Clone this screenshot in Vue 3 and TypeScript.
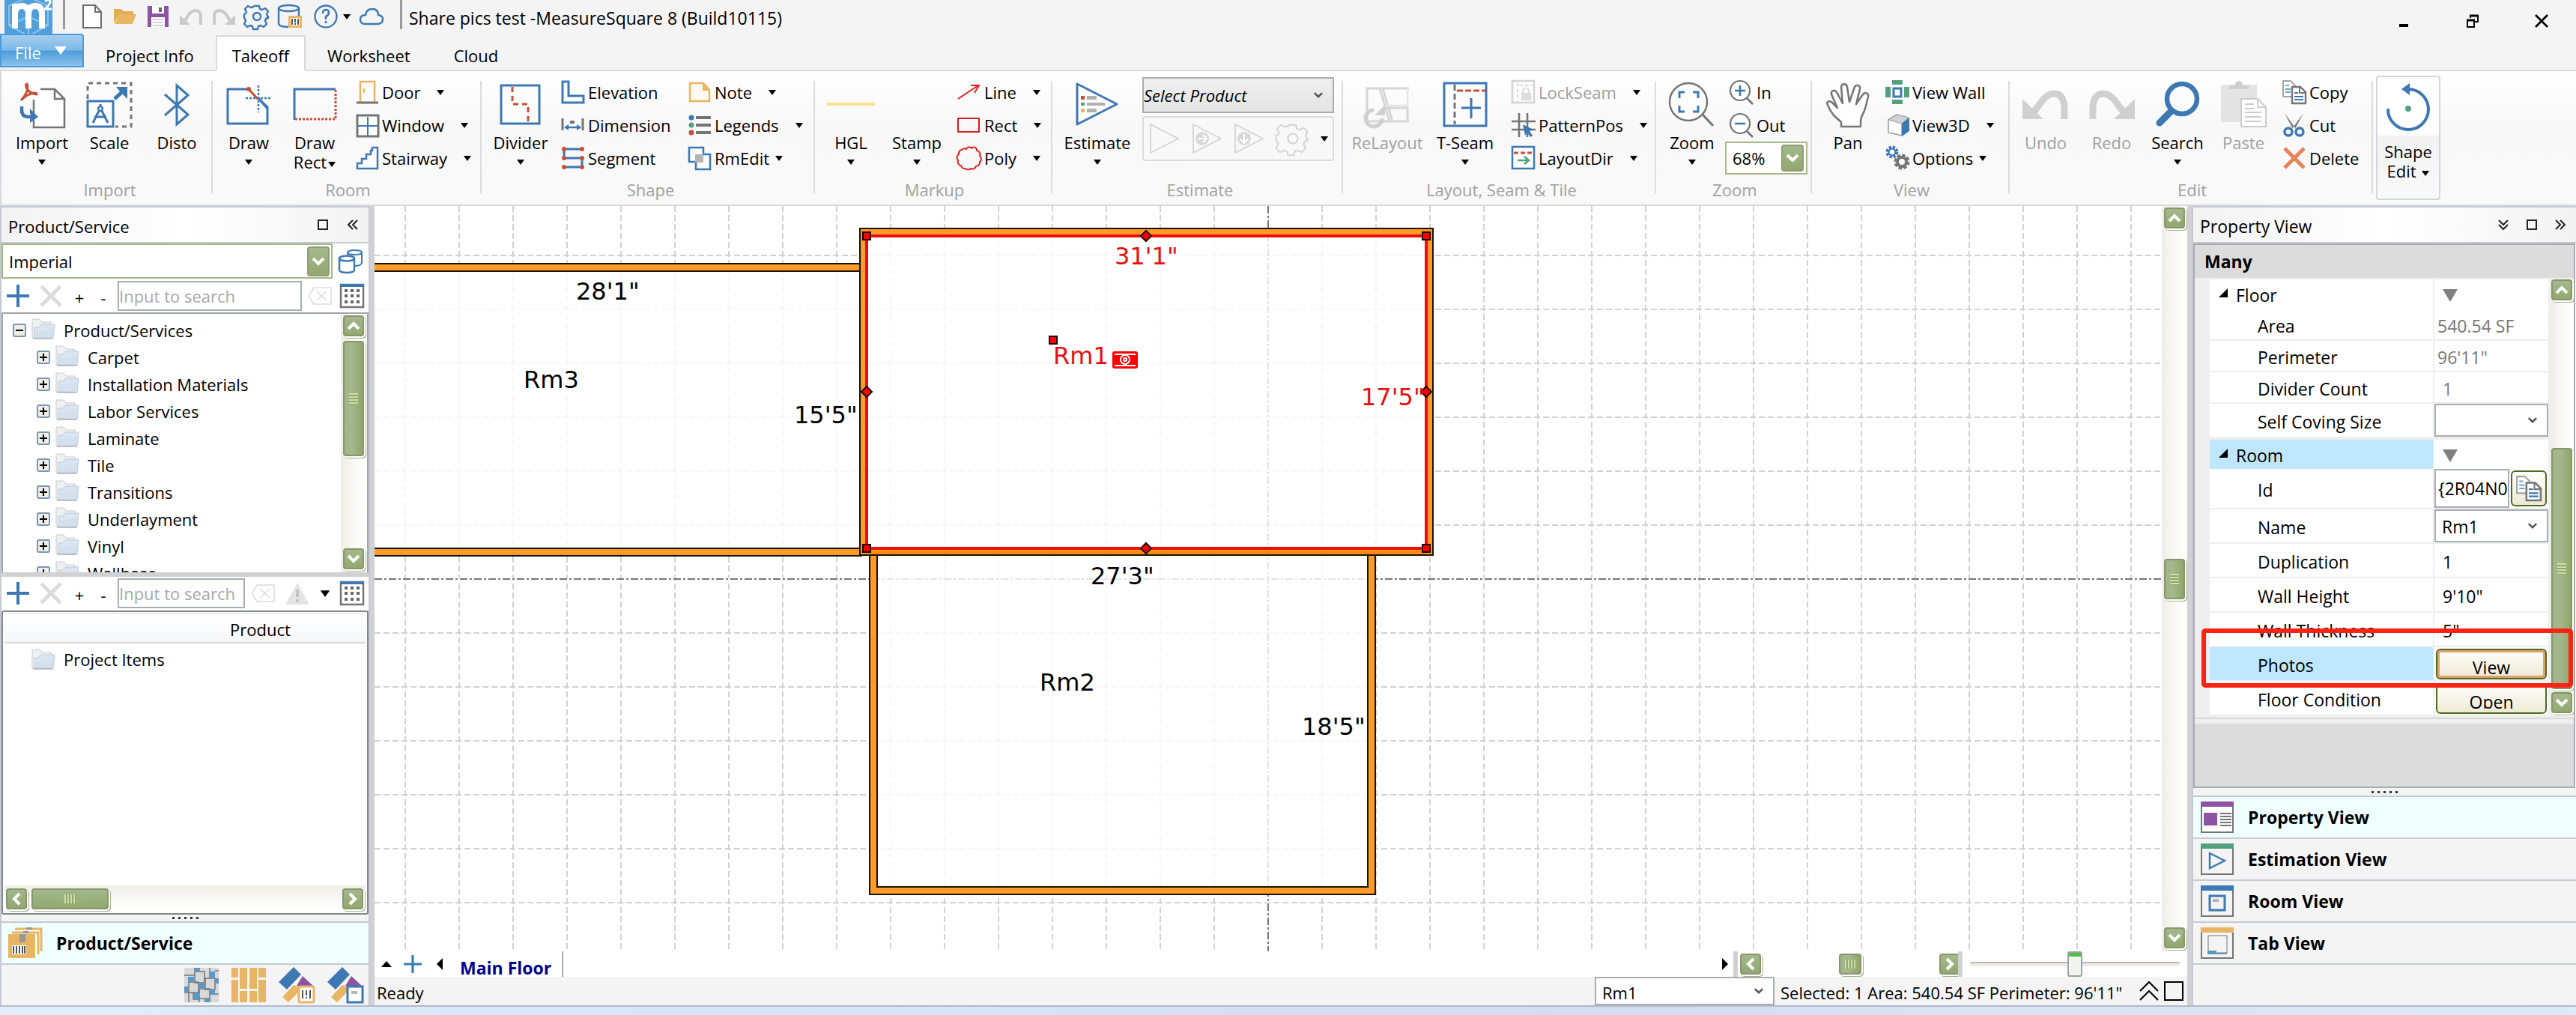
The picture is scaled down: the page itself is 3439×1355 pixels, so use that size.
<script setup lang="ts">
import { h, ref } from 'vue'

type Glyph = [string, string]

const B = '#3e78b3', R = '#c8503a', G = '#757575', GR = '#52a17e', Y = '#e8b564', P = '#8c54a1', L = '#d4d4d4'
const s = (c: string, w = 3) => `fill="none" stroke="${c}" stroke-width="${w}"`
const gear = (c: string, w: number) =>
  `<path ${s(c, w)} stroke-linejoin="round" d="M13 2h6l1 4 3 1 4-2 4 4-2 4 1 2 0 1 1 0v0l0 0v0l0 2-3 1-1 3 2 4-4 4-4-2-3 1-1 4h-6l-1-4-3-1-4 2-4-4 2-4-1-3-1-1V13l2-1 1-2-2-4 4-4 4 2 3-1z"/><circle cx="16" cy="16" r="5" ${s(c, w)}/>`

const glyphs: Record<string, Glyph> = {
  logo: ['0 0 64 45', `<rect width="64" height="45" fill="#519fda"/><path ${s('#8cc2ea', 2)} d="M32-4 6 8v26l26 14 26-14V8zM6 34l26-12 26 12M32 22v24"/><path ${s('#fff', 8)} d="M14 38V5M14 19q0-11 9-11t9 11v19M32 19q0-11 9-11t9 11v19"/><path ${s('#fff', 3)} d="M54 2q6-5 7 0 0 4-7 10h9"/>`],
  newdoc: ['0 0 32 32', `<path fill="#fff" stroke="#6c6c6c" stroke-width="2" d="M4 1h16l8 9v21H4z"/><path ${s('#6c6c6c', 2)} d="M20 1v9h8"/>`],
  open: ['0 0 32 32', `<path fill="#e2ab56" d="M1 6h10l3 3h13v5H8L1 25z"/><path fill="${Y}" d="M8 13h23l-5 13H2z"/>`],
  save: ['0 0 32 32', `<path fill="${P}" d="M2 2h28v28H2z"/><path fill="#fff" d="M8 2h16v10H8zM7 17h18v13H7z"/><path fill="#666" d="M17 4h4v6h-4z"/><path ${s('#aaa', 1)} d="M9 20h14M9 24h14M9 28h14"/>`],
  qundo: ['0 0 32 32', `<path ${s('#c9c9c9', 4)} d="M29 27V16q0-8-7-8t-13 12L6 23"/><path fill="#c9c9c9" d="M1 14v13h14z"/>`],
  qredo: ['0 0 32 32', `<path ${s('#c9c9c9', 4)} d="M3 27V16q0-8 7-8t13 12l3 3"/><path fill="#c9c9c9" d="M31 14v13H17z"/>`],
  gear: ['0 0 32 32', gear(B, 2.4)],
  gearoff: ['0 0 32 32', gear(L, 1.6)],
  db: ['0 0 32 32', `<path ${s(B, 2.4)} d="M1 5v20q0 5 13 5M28 15V5"/><ellipse cx="14.500" cy="5" rx="13.500" ry="4" ${s(B, 2.4)}/><path fill="${Y}" d="M14 15h18v16H14z"/><path fill="#fff" d="M17 18h12v10H17z"/><path ${s('#555', 2)} d="M19 19v8M23 19v5m0 1v2M27 19v8"/>`],
  help: ['0 0 32 32', `<circle cx="16" cy="16" r="14.500" ${s(B, 2.4)}/><path ${s(B, 2.6)} d="M12 12q0-5 4-5t4 4q0 3-4 5v4M16 22v3"/>`],
  cloud: ['0 0 32 32', `<path ${s(B, 2.4)} d="M7 26q-6 0-6-6t7-6q1-8 9-8t8 8q6 1 6 6t-6 6z"/>`],
  import: ['0 0 64 64', `<path fill="#fff" stroke="${G}" stroke-width="2.500" d="M30 11h19l13 13v38H21V25"/><path ${s(G, 2.5)} d="M49 11v13h13"/><path ${s(R, 3)} d="M4 26c6-6 11-16 8-22-4 0 0 13 13 14 1-4-12-2-21 8z"/><path ${s(B, 4.5)} d="M5 34v5q0 9 9 9h8"/><path fill="${B}" d="m16 37 11 11-11 8v-5l4-3-4-4z"/>`],
  scale: ['0 0 64 64', `<path ${s(G, 3)} stroke-dasharray="6 5" d="M3 24V3h58v58H40"/><path fill="#fff" stroke="${B}" stroke-width="3" d="M3 27h34v34H3z"/><path ${s(B, 5)} d="M39 24 54 10"/><path fill="${B}" d="M41 8h15v16l-5-5-4-4z"/><circle cx="20" cy="37" r="3" ${s(B, 2.4)}/><path ${s(B, 3)} d="m18 40-8 16M22 40l8 16M12 48h16M20 31v4"/>`],
  disto: ['0 0 64 64', `<path ${s(B, 3)} d="m16 46 31-27L32 6v52l15-13-31-27"/>`],
  draw: ['0 0 64 64', `<path fill="#fcfcfc" stroke="${B}" stroke-width="3" d="M32 11H4v46h53V35L32 11"/><path stroke="#fcfcfc" stroke-width="4" d="m33 11 13 12"/><path ${s(R, 3)} d="m32 11 12 13"/><circle cx="32" cy="11" r="3" fill="${R}"/><path ${s(B, 2.5)} stroke-dasharray="3 2" d="M28 23h34M45 6v36"/><path ${s(B, 3)} d="m44 22 13 15"/>`],
  drawrect: ['0 0 64 64', `<path ${s(B, 3)} d="M5 52V11h55"/><path ${s(R, 3)} stroke-dasharray="3 2" d="M60 12v39H6"/>`],
  divider: ['0 0 64 64', `<path fill="#fcfcfc" stroke="${B}" stroke-width="3" d="M6 6h51v51H6z"/><path ${s(R, 3)} stroke-dasharray="7 5" d="M21 8v23h21v26"/>`],
  hgl: ['0 0 64 64', `<path fill="#f5e48a" d="M0 29h64v4H0z"/>`],
  blank: ['0 0 64 64', ''],
  estimate: ['0 0 64 64', `<path fill="#fcfcfc" stroke="${B}" stroke-width="3" stroke-linejoin="round" d="M5 4 58 31 5 58z"/><path fill="${R}" d="M10 20h5v5h-5z"/><path fill="${GR}" d="M10 29h5v4h-5z"/><path fill="${Y}" d="M10 37h5v5h-5z"/><path fill="#b0b0b0" d="M18 20h13v5H18zM18 29h24v4H18zM18 37h13v5H18z"/>`],
  relayout: ['0 0 64 64', `<path ${s('#d6d6d6', 3)} d="M61 10H5v44h56M22 10l13 44M26 10l13 44M59 36v18M31 36h28v18"/><path ${s('#e6e6e6', 2.5)} d="M29 33h30V10"/><circle cx="14" cy="50" r="11" fill="none" stroke="#d0d0d0" stroke-width="5" stroke-dasharray="52 17"/><path fill="#d0d0d0" d="M15 46h14V32z"/>`],
  tseam: ['0 0 64 64', `<path fill="#fcfcfc" stroke="${B}" stroke-width="3" d="M4 3h56v57H4z"/><path ${s(G, 3)} stroke-dasharray="8 4" d="M18 5v53"/><path ${s(R, 3)} stroke-dasharray="8 3" d="M21 13h38"/><path ${s(B, 3)} d="M27 36h26M40 23v27"/>`],
  zoom: ['0 0 64 64', `<circle cx="27" cy="28" r="25" fill="#fff" stroke="${G}" stroke-width="2.500"/><path ${s(G, 3)} d="m46 45 14 15"/><path ${s(B, 3)} d="M15 23v-8h7M33 15h7v8M40 33v8h-7M22 41h-7v-8"/>`],
  pan: ['0 0 64 64', `<path fill="#fff" stroke="${G}" stroke-width="2.500" stroke-linejoin="round" d="M23 61V55L13 46C9 41 6 35 4 30 5 26 9 27 11 29L18 36 10 18C9 13 14 11 17 15L25 30 23 8C24 3 30 3 31 8L34 28 41 8C44 4 49 6 48 11L43 31 52 18C56 14 60 17 59 21 57 28 56 36 53 42 50 47 49 51 49 55V61Z"/>`],
  undo: ['0 0 64 64', `<path ${s('#d0d0d0', 9)} d="M57 51V34Q55 16 42 17 32 18 22 34L12 46"/><path fill="#d0d0d0" d="M1 24v27h28z"/>`],
  redo: ['0 0 64 64', `<path ${s('#d0d0d0', 9)} d="M7 51V34Q9 16 22 17 32 18 42 34L52 46"/><path fill="#d0d0d0" d="M63 24v27H35z"/>`],
  search: ['0 0 64 64', `<circle cx="38" cy="24" r="20" ${s(B, 6.5)}/><path ${s(B, 9)} stroke-linecap="round" d="M22 42 8 56"/>`],
  paste: ['0 0 64 64', `<path fill="#e4e4e4" d="M2 5h48v50H2z"/><path fill="#cfcfcf" d="M13 11V6h8q0-6 5-6t5 6h8v5z"/><path fill="#fff" stroke="#ccc" stroke-width="2" d="M29 24h22l11 11v26H29z"/><path ${s('#ccc', 2)} d="M51 24v11h11M34 31h12M34 37h12M34 42h22M34 48h22M34 54h22"/>`],
  shapeedit: ['0 0 64 64', `<path ${s(B, 4)} d="M5 34a27 27 0 1 0 27-26"/><path fill="${B}" d="m23 8 11-8v16z"/><circle cx="32" cy="34" r="4" fill="${GR}"/>`],
  door: ['0 0 32 32', `<path fill="#fffdf8" stroke="${Y}" stroke-width="2.500" d="M7 2h19v28H7z"/><path fill="${Y}" d="M11 11h2v6h-2z"/><path ${s(G, 3)} d="M2 30h29"/>`],
  window: ['0 0 32 32', `<path fill="#fff" stroke="${G}" stroke-width="3" d="M3 3h28v28H3z"/><path ${s(B, 2)} d="M17 5v25M4 17h26"/>`],
  stair: ['0 0 32 32', `<path fill="#fcfcfc" stroke="${B}" stroke-width="2.500" d="M3 30v-7h6v-6h6v-6h6V6h0 2V2h7v28z"/>`],
  elev: ['0 0 32 32', `<path fill="#fcfcfc" stroke="${B}" stroke-width="3" d="M2 2h8v19h20v9H2z"/>`],
  dimen: ['0 0 32 32', `<path ${s(G, 3)} d="M2 7v16M29 7v16"/><path fill="${G}" d="M12 10h6v4h-6z"/><path ${s(B, 2.5)} d="M6 19h20"/><path fill="${B}" d="m4 19 6-4v8zM27 19l-6-4v8z"/>`],
  segment: ['0 0 32 32', `<path ${s(B, 3)} d="M28 4H4v12h24v12H4"/><g fill="${R}"><circle cx="4" cy="4" r="3"/><circle cx="28" cy="4" r="3"/><circle cx="4" cy="16" r="3"/><circle cx="28" cy="16" r="3"/><circle cx="4" cy="28" r="3"/><circle cx="28" cy="28" r="3"/></g>`],
  note: ['0 0 32 32', `<path fill="#fffaf0" stroke="${Y}" stroke-width="2.500" d="M3 4h18l8 9v15H3z"/><path fill="${Y}" d="M20 4v10h9z"/>`],
  legends: ['0 0 32 32', `<path ${s(G, 4)} d="M11 6h20M11 16h20M11 26h20"/><circle cx="5" cy="6" r="3.500" fill="${B}"/><circle cx="5" cy="16" r="3.500" fill="${GR}"/><circle cx="5" cy="26" r="3.500" fill="${R}"/>`],
  rmedit: ['0 0 32 32', `<path fill="#fcfcfc" stroke="${B}" stroke-width="2.500" d="M2 2h19v9h9v20H11V21H2z"/><path fill="#b3b3b3" d="M10 11h11v11H10z"/>`],
  line: ['0 0 32 32', `<path ${s('#e02020', 2)} d="M1 25 28 7M18 7h11l-6 10"/>`],
  rect: ['0 0 32 32', `<path ${s('#d02020', 2)} d="M1 7h28v18H1z"/>`],
  poly: ['0 0 32 32', `<path ${s('#e02020', 2)} d="M12 4a4 4 0 0 1 7-1 4 4 0 0 1 7 3 5 5 0 0 1 4 7 5 5 0 0 1 0 8 5 5 0 0 1-5 6 5 5 0 0 1-7 3 5 5 0 0 1-7 0 5 5 0 0 1-6-4 5 5 0 0 1-4-7 5 5 0 0 1 1-8 5 5 0 0 1 4-6 5 5 0 0 1 6-1z"/>`],
  lockseam: ['0 0 32 32', `<path ${s(L, 2.5)} d="M1 1h29v29H1z"/><path ${s('#dcdcdc', 2)} stroke-dasharray="5 3" d="M8 3v26M10 7h19"/><path fill="#dcdcdc" d="M13 17h13v10H13z"/><path ${s('#dcdcdc', 2)} d="M15 17v-4q4-5 8 0v4"/>`],
  pattern: ['0 0 32 32', `<path ${s(G, 2.6)} d="M10 0v32M21 0v32M0 11h32M0 22h32"/><path fill="${B}" d="m15 15 14 7-5 2 4 6-3 2-4-6-3 4z"/>`],
  layoutdir: ['0 0 32 32', `<path fill="#fff" stroke="${B}" stroke-width="2.500" d="M1 1h29v29H1z"/><path ${s(R, 3)} stroke-dasharray="6 3" d="M3 9h27"/><path ${s(GR, 2.6)} d="M8 19h14M17 14l6 5-6 5"/>`],
  zin: ['0 0 32 32', `<circle cx="14" cy="14" r="13" fill="#fff" stroke="${G}" stroke-width="2.200"/><path ${s(G, 2.6)} d="m23 24 8 8"/><path ${s(B, 2.6)} d="M7 14h14M14 7v14"/>`],
  zout: ['0 0 32 32', `<circle cx="14" cy="14" r="13" fill="#fff" stroke="${G}" stroke-width="2.200"/><path ${s(G, 2.6)} d="m23 24 8 8"/><path ${s(B, 2.6)} d="M7 14h14"/>`],
  viewwall: ['0 0 32 32', `<path fill="${GR}" d="M9 0h14v6H9zM9 26h14v6H9zM0 9h7v14H0zM25 9h7v14h-7z"/><path fill="#fff" stroke="${B}" stroke-width="3" d="M11 11h10v11H11z"/>`],
  view3d: ['0 0 32 32', `<path fill="#fff" stroke="#999" stroke-width="1.500" d="M4 9 15 2l14 4-7 9v15L4 26z"/><path fill="#cfd2d6" stroke="#999" stroke-width="1" d="M4 9 16 2l15 4-9 8z"/><path fill="${B}" d="m22 14 10-8v18l-10 7z"/>`],
  options: ['0 0 32 32', `<circle cx="9" cy="8" r="6" fill="none" stroke="${B}" stroke-width="5" stroke-dasharray="3 1.700"/><circle cx="9" cy="8" r="4.500" ${s(B, 2)}/><circle cx="22" cy="21" r="8" fill="none" stroke="${G}" stroke-width="5" stroke-dasharray="4 2.280"/><circle cx="22" cy="21" r="6" ${s(G, 4)}/>`],
  copy: ['0 0 32 32', `<path fill="#fff" stroke="#a5a5a5" stroke-width="2" d="M1 1h10l6 6v15H1z"/><path ${s('#6fa3d0', 2)} d="M4 7h5M4 12h7M4 16h7"/><path fill="#fff" stroke="${G}" stroke-width="2.400" d="M13 9h11l7 7v15H13z"/><path ${s(G, 2)} d="M23 9v8h8"/><path ${s(B, 2)} d="M16 17h5M16 22h12M16 26h12"/>`],
  cut: ['0 0 32 32', `<path fill="${G}" d="M3 0 18 21h-4zM28 0 13 21h4z"/><circle cx="8" cy="25" r="5" ${s(B, 3.4)}/><circle cx="23" cy="25" r="5" ${s(B, 3.4)}/>`],
  delete: ['0 0 32 32', `<path ${s('#e5835a', 5)} d="m3 3 26 26M29 3 3 29"/>`],
  run: ['0 0 40 40', `<path ${s(L, 1.8)} stroke-linejoin="round" d="M1 1 38 20 1 39z"/>`],
  runr: ['0 0 40 40', `<path ${s(L, 1.8)} stroke-linejoin="round" d="M1 1 38 20 1 39z"/><circle cx="13" cy="20" r="9" fill="#d8d8d8"/><path ${s('#fff', 2)} d="M7 20h11M14 15l5 5-5 5"/>`],
  rund: ['0 0 40 40', `<path ${s(L, 1.8)} stroke-linejoin="round" d="M1 1 38 20 1 39z"/><circle cx="13" cy="20" r="9" fill="#d8d8d8"/><path ${s('#fff', 2)} d="M13 14v11M8 21l5 5 5-5"/>`],
  plus: ['0 0 30 30', `<path ${s(B, 4)} d="M0 15h30M15 0v30"/>`],
  cross: ['0 0 30 30', `<path ${s('#dcdcdc', 5)} d="m2 2 26 26M28 2 2 28"/>`],
  clear: ['0 0 32 32', `<path ${s('#dcdcdc', 1.6)} d="M8 5h23v22H8L1 16zM12 10l13 12M25 10 12 22"/>`],
  gridico: ['0 0 32 32', `<path fill="#fff" stroke="${G}" stroke-width="2.500" d="M1 1h30v30H1z"/><path fill="${B}" d="M0 0h32v4H0z"/><path ${s('#666', 4)} stroke-dasharray="4 4" d="M6 9h22M6 16h22M6 24h22"/>`],
  dbs: ['0 0 32 32', `<path fill="#fff" stroke="${B}" stroke-width="2" d="M12 4v14q0 4 9 4t10-4V4"/><ellipse cx="21.500" cy="4" rx="9.500" ry="3" fill="#fff" stroke="${B}" stroke-width="2"/><path fill="#fff" stroke="${B}" stroke-width="2.500" d="M1 12v15q0 4 10 4t10-4V12"/><ellipse cx="11" cy="12" rx="10" ry="3.500" fill="#fff" stroke="${B}" stroke-width="2.500"/>`],
  warn: ['0 0 32 32', `<path fill="#e4e4e4" d="M16 2 32 31H0z"/><path ${s('#c4c4c4', 4)} d="M16 11v10M16 24v4"/>`],
  folder: ['0 0 32 28', `<path fill="#eef0f1" stroke="#c8ccd0" d="M1 1h10l3 4h12v21H1z"/><path fill="#dbe5f1" stroke="#bccbdc" d="M4 12h6l3-4h18l-2 18H4z"/><path fill="#cddbea" d="M5 18 30 14l-2 12H5z" opacity=".5"/><path stroke="#aab0b6" stroke-width="1.500" d="M2 27h27"/>`],
  minusbox: ['0 0 18 18', `<rect x="1" y="1" width="16" height="16" rx="2" fill="#f0eee8" stroke="#7d96b2" stroke-width="2"/><path ${s('#000', 2)} d="M4 9h10"/>`],
  plusbox: ['0 0 18 18', `<rect x="1" y="1" width="16" height="16" rx="2" fill="#f0eee8" stroke="#7d96b2" stroke-width="2"/><path ${s('#000', 2)} d="M4 9h10M9 4v10"/>`],
  boxes: ['0 0 46 42', `<path ${s(Y, 3)} d="M9 2h35v30M5 7h35v29"/><path fill="${Y}" d="M0 9h36v32H0z"/><path fill="#999" d="M15 9h8v11h-8zM24 0h8v3h-8zM20 5h7v3h-7z"/><path fill="#fff" d="M5 24h19v12H5z"/><path ${s('#555', 2)} d="M7 25v10M11 25v10M15 25v10M19 25v10M22 25v10"/>`],
  tile: ['0 0 46 46', `<path fill="#d9d9d9" d="M0 0h46v46H0z"/><path ${s(G, 1.5)} d="M0 10h14V0M14 5h13v15H14zM28 14h13v15H28zM6 19h13v14H6zM20 28h14v13H20zM34 0v14M41 4h5M0 33h6v13M33 41v5M12 33v9h8M19 20h9M41 20h5M34 35h12M20 41v5"/><path fill="#5698d0" d="M14 0h7v5h-7zM5 12h8v7H5zM34 5h7v8h-7zM20 21h7v7h-7zM41 14h5v7h-5zM0 25h5v8H0zM13 34h7v7h-7zM34 29h7v7h-7zM27 42h8v4h-8z"/>`],
  planks: ['0 0 46 46', `<path fill="${Y}" d="M0 0h9v13H0zM0 16h9v30H0zM11 0h10v28H11zM11 31h10v15H11zM24 0h10v28H24zM24 31h10v15H24zM36 0h10v13H36zM36 16h10v30H36z"/>`],
  swatchA: ['0 0 48 48', `<path fill="${B}" d="m20 0 10 10-19 20L0 20z"/><path fill="${P}" d="m32 12 14 13H24z"/><path fill="${Y}" d="m20 24 6 2v8L13 47 5 40z"/><rect x="27" y="26" width="20" height="21" rx="2" fill="#fff" stroke="${Y}" stroke-width="3"/><path ${s('#555', 2)} d="M32 31v11M37 31v7m0 2v2M42 31v11"/>`],
  swatchB: ['0 0 48 48', `<path fill="${B}" d="m20 0 10 10-19 20L0 20z"/><path fill="${P}" d="m32 12 14 13H24z"/><path fill="${Y}" d="m20 24 6 2v8L13 47 5 40z"/><rect x="27" y="26" width="20" height="21" fill="#fff" stroke="${B}" stroke-width="3"/><path fill="#b5b5b5" d="M32 32h8v4h-8z"/>`],
  navprop: ['0 0 44 42', `<path fill="#fff" stroke="${G}" stroke-width="2" d="M1 1h42v40H1z"/><path fill="${P}" d="M0 0h44v7H0zM4 15h18v17H4z"/><path ${s(G, 2)} d="M26 16h15M26 20h15M26 24h15M26 28h15M26 32h15"/>`],
  navest: ['0 0 44 42', `<path fill="#f4f4f4" stroke="${G}" stroke-width="2" d="M1 1h42v40H1z"/><path fill="${GR}" d="M0 0h44v7H0z"/><path ${s(B, 2.4)} d="m12 13 20 10-20 10z"/>`],
  navroom: ['0 0 44 42', `<path fill="#f4f4f4" stroke="${G}" stroke-width="2" d="M1 1h42v40H1z"/><path fill="${B}" d="M0 0h44v7H0z"/><path ${s(B, 3)} d="M12 14h20v19H12z"/><path fill="#b5b5b5" d="M16 18h8v4h-8z"/>`],
  navtab: ['0 0 44 42', `<path fill="#f4f4f4" stroke="${G}" stroke-width="2" d="M1 1h42v40H1z"/><path fill="${Y}" d="M0 0h44v7H0z"/><path ${s(G, 1)} d="M10 11h25v23H10z"/><path fill="#579bb8" d="M9 31h12v3h14v2H9z"/>`],
  down: ['0 0 10 8', `<path d="M0 1h10L5 8z"/>`],
  up: ['0 0 14 10', `<path d="M0 9h14L7 1z"/>`],
  left: ['0 0 8 16', `<path d="M8 0v16L0 8z"/>`],
  right: ['0 0 8 16', `<path d="M0 0v16l8-8z"/>`],
  chev: ['0 0 14 10', `<path ${s('#555', 3)} d="m1 1 6 6 6-6"/>`],
  wchev: ['0 0 18 14', `<path ${s('#fff', 4)} d="m2 3 7 7 7-7"/>`],
  dchev: ['0 0 14 14', `<path ${s('#222', 2)} d="M7 1 1 7l6 6M13 1 7 7l6 6"/>`],
  sq: ['0 0 14 14', `<path ${s('#222', 2)} d="M1 1h12v12H1z"/>`],
  dupchev: ['0 0 26 26', `<path ${s('#000', 2)} d="M1 13 13 1l12 12M1 25l12-12 12 12"/>`],
  bigsq: ['0 0 26 26', `<path ${s('#000', 2)} d="M1 1h24v24H1z"/>`],
  min: ['0 0 18 18', `<path d="M3 13h12v4H3z"/>`],
  restore: ['0 0 18 18', `<path ${s('#000', 2)} d="M6 5V2h10v8h-4M2 8h9v9H2z"/><path ${s('#000', 3)} d="M5 2h12M1 8h11"/>`],
  close: ['0 0 18 18', `<path ${s('#000', 2.6)} d="m1 1 16 16M17 1 1 17"/>`],
  tri: ['0 0 20 20', `<path fill="#808080" d="M0 2h20L10 19z"/>`],
  fold: ['0 0 12 12', `<path d="M12 0v12H0z"/>`]
}

const Ico = (p: { n: string; w: number; ht?: number }) =>
  h('svg', { class: 'ico', viewBox: glyphs[p.n][0], width: p.w, height: p.ht ?? p.w, 'aria-hidden': 'true', innerHTML: glyphs[p.n][1] })
Ico.props = ['n', 'w', 'ht']

interface Big { n: string; t: string[]; off?: boolean; drop?: 'below' | 'inline'; wide?: boolean }
interface Small { n: string; t: string; off?: boolean; drop?: 'far' | 'near' }
interface Group { id: string; t: string; width: number; big: Big[]; cols: Small[][] }

const groups: Group[] = [
  { id: 'import', t: 'Import', width: 280, big: [{ n: 'import', t: ['Import'], drop: 'below' }, { n: 'scale', t: ['Scale'] }, { n: 'disto', t: ['Disto'] }], cols: [] },
  { id: 'room', t: 'Room', width: 357, big: [{ n: 'draw', t: ['Draw'], drop: 'below' }, { n: 'drawrect', t: ['Draw', 'Rect'], drop: 'inline' }],
    cols: [[{ n: 'door', t: 'Door', drop: 'far' }, { n: 'window', t: 'Window', drop: 'far' }, { n: 'stair', t: 'Stairway', drop: 'far' }]] },
  { id: 'shape', t: 'Shape', width: 443, big: [{ n: 'divider', t: ['Divider'], drop: 'below' }],
    cols: [[{ n: 'elev', t: 'Elevation' }, { n: 'dimen', t: 'Dimension' }, { n: 'segment', t: 'Segment' }],
      [{ n: 'note', t: 'Note', drop: 'far' }, { n: 'legends', t: 'Legends', drop: 'far' }, { n: 'rmedit', t: 'RmEdit', drop: 'near' }]] },
  { id: 'markup', t: 'Markup', width: 315, big: [{ n: 'hgl', t: ['HGL'], drop: 'below' }, { n: 'blank', t: ['Stamp'], drop: 'below' }],
    cols: [[{ n: 'line', t: 'Line', drop: 'far' }, { n: 'rect', t: 'Rect', drop: 'far' }, { n: 'poly', t: 'Poly', drop: 'far' }]] },
  { id: 'estimate', t: 'Estimate', width: 386, big: [{ n: 'estimate', t: ['Estimate'], drop: 'below', wide: true }], cols: [] },
  { id: 'layout', t: 'Layout, Seam & Tile', width: 416, big: [{ n: 'relayout', t: ['ReLayout'], off: true, wide: true }, { n: 'tseam', t: ['T-Seam'], drop: 'below', wide: true }],
    cols: [[{ n: 'lockseam', t: 'LockSeam', off: true, drop: 'far' }, { n: 'pattern', t: 'PatternPos', drop: 'far' }, { n: 'layoutdir', t: 'LayoutDir', drop: 'far' }]] },
  { id: 'zoom', t: 'Zoom', width: 206, big: [{ n: 'zoom', t: ['Zoom'], drop: 'below' }], cols: [[{ n: 'zin', t: 'In' }, { n: 'zout', t: 'Out' }]] },
  { id: 'view', t: 'View', width: 262, big: [{ n: 'pan', t: ['Pan'] }],
    cols: [[{ n: 'viewwall', t: 'View Wall' }, { n: 'view3d', t: 'View3D', drop: 'far' }, { n: 'options', t: 'Options', drop: 'near' }]] },
  { id: 'edit', t: 'Edit', width: 483, big: [{ n: 'undo', t: ['Undo'], off: true }, { n: 'redo', t: ['Redo'], off: true }, { n: 'search', t: ['Search'], drop: 'below' }, { n: 'paste', t: ['Paste'], off: true }],
    cols: [[{ n: 'copy', t: 'Copy' }, { n: 'cut', t: 'Cut' }, { n: 'delete', t: 'Delete' }]] }
]

const quick = ['newdoc', 'open', 'save', 'qundo', 'qredo', 'gear', 'db']
const tabs = ['Project Info', 'Takeoff', 'Worksheet', 'Cloud']
const activeTab = ref('Takeoff')
const services = ['Carpet', 'Installation Materials', 'Labor Services', 'Laminate', 'Tile', 'Transitions', 'Underlayment', 'Vinyl', 'Wallbase']
const navs = [
  { n: 'navprop', t: 'Property View' },
  { n: 'navest', t: 'Estimation View' },
  { n: 'navroom', t: 'Room View' },
  { n: 'navtab', t: 'Tab View' }
]
const props = [
  { k: 'Floor', kind: 'cat', cls: 'r-cat' },
  { k: 'Area', kind: 'ro', v: '540.54 SF', cls: 'r-s' },
  { k: 'Perimeter', kind: 'ro', v: '96\'11"', cls: 'r-s' },
  { k: 'Divider Count', kind: 'ro', v: '1', cls: 'r-s one' },
  { k: 'Self Coving Size', kind: 'select', v: '', cls: 'r-gap' },
  { k: 'Room', kind: 'cat', cls: 'r-cat2 hot' },
  { k: 'Id', kind: 'id', v: '{2R04N0', cls: 'r-id' },
  { k: 'Name', kind: 'select', v: 'Rm1', cls: 'r-m' },
  { k: 'Duplication', kind: 'text', v: '1', cls: 'r-m' },
  { k: 'Wall Height', kind: 'text', v: '9\'10"', cls: 'r-m' },
  { k: 'Wall Thickness', kind: 'text', v: '5"', cls: 'r-m' },
  { k: 'Photos', kind: 'button', v: 'View', cls: 'r-m hot focus' },
  { k: 'Floor Condition', kind: 'button', v: 'Open', cls: 'r-m' }
]

const gridX = Array.from({ length: 33 }, (_, i) => 541 + i * 72)
const gridY = Array.from({ length: 13 }, (_, i) => 341 + i * 72)
const corners = [[1157, 315], [1904, 315], [1157, 732], [1904, 732], [1406, 454]]
const mids = [[1530, 315], [1530, 732], [1157, 523], [1904, 523]]
const zoomPos = ref(46)
</script>

<template>
  <div class="app">
    <header>
      <div class="titlebar">
        <Ico n="logo" :w="64" :ht="45" class="logo" />
        <i class="bar"></i>
        <div class="quick">
          <button v-for="q in quick" :key="q" :aria-label="q"><Ico :n="q" :w="32" /></button>
          <button class="helpb" aria-label="Help"><Ico n="help" :w="32" /><Ico n="down" :w="10" :ht="8" /></button>
          <button aria-label="Cloud"><Ico n="cloud" :w="32" /></button>
        </div>
        <i class="bar"></i>
        <h1>Share pics test -MeasureSquare 8 (Build10115)</h1>
        <div class="win">
          <button aria-label="Minimize"><Ico n="min" :w="18" /></button>
          <button aria-label="Restore"><Ico n="restore" :w="18" /></button>
          <button aria-label="Close"><Ico n="close" :w="18" /></button>
        </div>
      </div>
      <nav class="tabs">
        <button class="file">File <svg width="16" height="12" viewBox="0 0 16 12"><path fill="#fff" d="M0 0h16L8 11z" /></svg></button>
        <button v-for="t in tabs" :key="t" class="tab" :class="{ on: t === activeTab }" @click="activeTab = t">{{ t }}</button>
      </nav>
    </header>

    <section class="ribbon">
      <template v-for="g in groups" :key="g.id">
        <div class="group" :class="g.id" :style="{ width: g.width + 'px' }">
          <div class="gbody">
            <button v-for="b in g.big" :key="b.n" class="big" :class="{ wide: b.wide, off: b.off }">
              <Ico :n="b.n" :w="64" />
              <span class="bl">
                <template v-for="(t, i) in b.t" :key="i"><br v-if="i" />{{ t }}</template>
                <Ico v-if="b.drop === 'inline'" n="down" :w="10" :ht="8" class="inl" />
              </span>
              <Ico v-if="b.drop === 'below'" n="down" :w="10" :ht="8" class="below" />
            </button>
            <div v-for="(c, ci) in g.cols" :key="ci" class="col">
              <button v-for="r in c" :key="r.t" class="small" :class="{ off: r.off }">
                <Ico :n="r.n" :w="32" /><span>{{ r.t }}</span>
                <Ico v-if="r.drop" n="down" :w="10" :ht="8" :class="r.drop" />
              </button>
              <div v-if="g.id === 'zoom'" class="combo zcombo">
                <input value="68%" aria-label="Zoom level" />
                <button class="gbtn" aria-label="Choose zoom"><Ico n="wchev" :w="18" :ht="14" /></button>
              </div>
            </div>
            <div v-if="g.id === 'estimate'" class="estcol">
              <span class="sel selprod">
                <select aria-label="Select Product"><option>Select Product</option></select>
                <Ico n="chev" :w="12" :ht="9" />
              </span>
              <div class="runs">
                <button aria-label="Run"><Ico n="run" :w="40" /></button>
                <button aria-label="Run next"><Ico n="runr" :w="40" /></button>
                <button aria-label="Run down"><Ico n="rund" :w="40" /></button>
                <button aria-label="Settings"><Ico n="gearoff" :w="42" /></button>
                <button aria-label="More"><Ico n="down" :w="10" :ht="8" /></button>
              </div>
            </div>
          </div>
          <div class="glabel">{{ g.t }}</div>
        </div>
        <i class="gsep"></i>
      </template>
      <button class="shapebtn">
        <Ico n="shapeedit" :w="64" />
        <span>Shape<br />Edit <Ico n="down" :w="10" :ht="8" class="inl" /></span>
      </button>
    </section>

    <main>
      <aside class="left">
        <div class="phead"><span>Product/Service</span><Ico n="sq" :w="14" class="h1i" /><Ico n="dchev" :w="14" /></div>
        <div class="unitrow">
          <div class="combo unit">
            <input value="Imperial" aria-label="Units" />
            <button class="gbtn" aria-label="Choose units"><Ico n="wchev" :w="18" :ht="14" /></button>
          </div>
          <Ico n="dbs" :w="32" />
        </div>
        <div class="tools">
          <button aria-label="Add"><Ico n="plus" :w="30" /></button>
          <button aria-label="Remove"><Ico n="cross" :w="30" /></button>
          <button class="sign">+</button><button class="sign">-</button>
          <input placeholder="Input to search" aria-label="Search products" />
          <button aria-label="Clear"><Ico n="clear" :w="32" /></button>
          <button aria-label="Columns"><Ico n="gridico" :w="32" /></button>
        </div>
        <div class="tree">
          <ul>
            <li class="root"><Ico n="minusbox" :w="18" /><Ico n="folder" :w="32" :ht="28" /><span>Product/Services</span></li>
            <li v-for="t in services" :key="t"><Ico n="plusbox" :w="18" /><Ico n="folder" :w="32" :ht="28" /><span>{{ t }}</span></li>
          </ul>
          <div class="vs">
            <button class="sb" aria-label="Up"><Ico n="wchev" :w="18" :ht="14" class="flip" /></button>
            <div class="thumb t1"><i class="grip"></i></div>
            <button class="sb end" aria-label="Down"><Ico n="wchev" :w="18" :ht="14" /></button>
          </div>
        </div>
        <div class="hsplit"></div>
        <div class="tools">
          <button aria-label="Add item"><Ico n="plus" :w="30" /></button>
          <button aria-label="Remove item"><Ico n="cross" :w="30" /></button>
          <button class="sign">+</button><button class="sign">-</button>
          <input placeholder="Input to search" aria-label="Search items" />
          <button aria-label="Clear items"><Ico n="clear" :w="32" /></button>
          <button aria-label="Warnings" class="warn"><Ico n="warn" :w="32" /><Ico n="down" :w="14" :ht="10" /></button>
          <button aria-label="Item columns"><Ico n="gridico" :w="32" /></button>
        </div>
        <div class="list">
          <div class="lhead">Product</div>
          <div class="litem"><Ico n="folder" :w="32" :ht="28" /><span>Project Items</span></div>
          <div class="hs">
            <button class="sb" aria-label="Left"><Ico n="wchev" :w="18" :ht="14" class="rl" /></button>
            <div class="thumb h"><i class="grip v"></i></div>
            <button class="sb end" aria-label="Right"><Ico n="wchev" :w="18" :ht="14" class="rr" /></button>
          </div>
        </div>
        <div class="dots"></div>
        <button class="nav on"><Ico n="boxes" :w="46" :ht="42" /><span>Product/Service</span></button>
        <div class="bicons">
          <button aria-label="Tile"><Ico n="tile" :w="46" /></button>
          <button aria-label="Planks"><Ico n="planks" :w="46" /></button>
          <button aria-label="Swatches"><Ico n="swatchA" :w="48" /></button>
          <button aria-label="Room swatches"><Ico n="swatchB" :w="48" /></button>
        </div>
      </aside>
      <div class="vsplit"></div>

      <section class="center">
        <div class="canvasrow">
          <svg class="plan" role="img" aria-label="Main floor plan">
            <g transform="translate(-500 -275)">
              <g stroke="#d2d2d2" stroke-width="2" stroke-dasharray="8 4">
                <line v-for="x in gridX" :key="'x' + x" :x1="x" :x2="x" y1="275" y2="1355" />
                <line v-for="y in gridY" :key="'y' + y" :y1="y" :y2="y" x1="500" x2="2900" />
              </g>
              <g stroke="#fff" stroke-width="2"><path d="M1693 275V1355M500 773H2900" /></g>
              <g stroke="#777" stroke-width="2" stroke-dasharray="10 3 3 3"><path d="M1693 275V1355M500 773H2900" /></g>
              <g fill="#fff" fill-opacity=".8">
                <path d="M500 351H1147V742H500zM1147 304H1914V742H1147zM1160 742H1836V1194H1160z" />
              </g>
              <g fill="#ff9b26" stroke="#1a1206" stroke-width="2">
                <path d="M490 352H1150V362H490zM490 732H1150V742H490z" />
                <path fill-rule="evenodd" d="M1161 735H1836V1194H1161zM1171 735V1184H1826V735z" />
                <path fill-rule="evenodd" d="M1148 305H1913V741H1148zM1158 315V731H1903V315z" />
              </g>
              <path fill="#ff8c0a" d="M1160 735H1904V740H1160z" />
              <path fill="none" stroke="#f00c0c" stroke-width="4" d="M1157 315H1904V732H1157z" />
              <g fill="#f00" stroke="#200" stroke-width="2">
                <rect v-for="c in corners" :key="c.join()" :x="c[0] - 5" :y="c[1] - 5" width="10" height="10" />
                <path v-for="m in mids" :key="m.join()" :d="`M${m[0]} ${m[1] - 7}l7 7-7 7-7-7z`" />
              </g>
              <g fill="#f00"><rect x="1485" y="469" width="34" height="23" rx="3" /></g>
              <g fill="none" stroke="#fff">
                <path d="M1488 473h28M1488 488h28" stroke-width="2" /><circle cx="1502" cy="480" r="6" stroke-width="2" /><circle cx="1502" cy="480" r="2" stroke-width="2" />
              </g>
              <g class="plantext">
                <text x="769" y="400">28'1"</text>
                <text x="699" y="518">Rm3</text>
                <text x="1060" y="565">15'5"</text>
                <text x="1456" y="780">27'3"</text>
                <text x="1388" y="922">Rm2</text>
                <text x="1738" y="981">18'5"</text>
                <text x="1488" y="353" class="red">31'1"</text>
                <text x="1406" y="486" class="red">Rm1</text>
                <text x="1817" y="541" class="red">17'5"</text>
              </g>
            </g>
          </svg>
          <div class="vs cvs">
            <button class="sb" aria-label="Scroll up"><Ico n="wchev" :w="18" :ht="14" class="flip" /></button>
            <div class="thumb t2"><i class="grip"></i></div>
            <button class="sb" aria-label="Scroll down"><Ico n="wchev" :w="18" :ht="14" /></button>
          </div>
        </div>
        <div class="floorbar">
          <button aria-label="Floors"><Ico n="up" :w="14" :ht="10" /></button>
          <button aria-label="Add floor"><Ico n="plus" :w="24" /></button>
          <button aria-label="Previous"><Ico n="left" :w="8" :ht="16" /></button>
          <button class="floor">Main Floor</button>
          <button class="next" aria-label="Next"><Ico n="right" :w="8" :ht="16" /></button>
          <i class="fsep"></i>
          <div class="fscroll">
            <button class="sb" aria-label="Scroll left"><Ico n="wchev" :w="18" :ht="14" class="rl" /></button>
            <div class="thumb sqr"><i class="grip v"></i></div>
            <button class="sb" aria-label="Scroll right"><Ico n="wchev" :w="18" :ht="14" class="rr" /></button>
          </div>
          <i class="fsep"></i>
          <input v-model="zoomPos" class="slider" type="range" min="0" max="92" aria-label="Zoom" />
        </div>
        <div class="status">
          <span class="ready">Ready</span>
          <span class="sel ssel">
            <select aria-label="Room"><option>Rm1</option></select><Ico n="chev" :w="12" :ht="9" />
          </span>
          <span class="stext">Selected: 1 Area: 540.54 SF Perimeter: 96'11"</span>
          <button aria-label="Expand"><Ico n="dupchev" :w="26" /></button>
          <button aria-label="Maximize"><Ico n="bigsq" :w="26" /></button>
        </div>
      </section>
      <div class="vsplit"></div>

      <aside class="right">
        <div class="phead"><span>Property View</span><Ico n="dchev" :w="14" class="rl h2i" /><Ico n="sq" :w="14" class="h2i" /><Ico n="dchev" :w="14" class="half" /></div>
        <div class="pbox">
          <div class="many">Many</div>
          <div class="pgrid">
            <table>
              <tbody>
                <tr v-for="p in props" :key="p.k" :class="[p.cls, p.kind]">
                  <th scope="row"><Ico v-if="p.kind === 'cat'" n="fold" :w="12" />{{ p.k }}</th>
                  <td>
                    <Ico v-if="p.kind === 'cat'" n="tri" :w="20" />
                    <span v-else-if="p.kind === 'select'" class="sel">
                      <select :aria-label="p.k"><option>{{ p.v }}</option></select><Ico n="chev" :w="12" :ht="9" />
                    </span>
                    <div v-else-if="p.kind === 'id'" class="idcell">
                      <input :value="p.v" aria-label="Id" /><button class="cream" aria-label="Copy id"><Ico n="copy" :w="34" /></button>
                    </div>
                    <button v-else-if="p.kind === 'button'" class="cream wideb"><span>{{ p.v }}</span></button>
                    <template v-else>{{ p.v }}</template>
                  </td>
                </tr>
              </tbody>
            </table>
            <div class="vs">
              <button class="sb" aria-label="Property up"><Ico n="wchev" :w="18" :ht="14" class="flip" /></button>
              <div class="thumb t3"><i class="grip"></i></div>
              <button class="sb" aria-label="Property down"><Ico n="wchev" :w="18" :ht="14" /></button>
            </div>
            <div class="callout"></div>
          </div>
          <div class="pfoot"></div>
        </div>
        <div class="dots"></div>
        <button v-for="(n, i) in navs" :key="n.n" class="nav" :class="{ on: i === 0 }"><Ico :n="n.n" :w="44" :ht="42" /><span>{{ n.t }}</span></button>
        <div class="bicons"></div>
      </aside>
    </main>
    <footer></footer>
  </div>
</template>

<style>
html, body { margin: 0; }
</style>

<style scoped>
.app { height: 100vh; min-height: 1100px; display: flex; flex-direction: column; overflow: hidden; background: #f4f4f4; font: 22px/26px "Open Sans", "Noto Sans", sans-serif; color: #000; }
.app * { box-sizing: border-box; }
button { border: 0; padding: 0; margin: 0; background: none; font: inherit; color: inherit; display: flex; align-items: center; }
input, select { font: inherit; color: inherit; margin: 0; padding: 0; border: 0; border-radius: 0; background: none; min-width: 0; }
.ico { display: block; flex: none; overflow: visible; }

.titlebar { height: 45px; display: flex; align-items: flex-start; }
.logo { margin: 0 14px 0 6px; }
.bar { width: 3px; height: 39px; background: #999; }
.quick { display: flex; gap: 12px; height: 44px; align-items: center; padding: 0 22px 0 20px; }
.helpb { gap: 7px; margin-left: 4px; }
h1 { font-size: 23px; font-weight: 400; line-height: 48px; margin: 0 auto 0 9px; white-space: nowrap; }
.win { display: flex; gap: 74px; padding: 19px 37px 0 0; }
.tabs { height: 50px; display: flex; border-bottom: 2px solid #d8d9dc; }
.file { width: 112px; height: 45px; padding: 4px 0 0 18px; gap: 18px; color: #fff; border: 2px solid #4c9cda; border-radius: 0 4px 0 0; background: linear-gradient(#a6cdee, #7db9e8 48%, #4c9ddb 52%, #8cc2ec); }
.file svg { margin-bottom: 4px; }
.tab { padding: 8px 27px 0; height: 50px; border: 2px solid transparent; }
.tab.on { padding: 6px 20px 0; margin-top: 2px; height: 48px; background: #fff; border-color: #d8d9dc; border-bottom-color: #fff; }

.ribbon { flex: none; height: 180px; display: flex; background: linear-gradient(#fff, #f8f8f8 40%, #f9f9f9); border-bottom: 2px solid #d8d9dc; border-left: 2px solid #d8d9dc; }
.group { flex: none; display: flex; flex-direction: column; padding-left: 4px; white-space: nowrap; }
.group.import { padding-left: 9px; }
.import .big { width: 90px; }
.group.shape, .group.estimate { padding-left: 8px; }
.group.layout { padding-left: 7px; }
.gsep { flex: none; width: 2px; height: 150px; margin-top: 13px; background: #dcdcdc; }
.gbody { height: 144px; display: flex; }
.glabel { color: #a0a0a0; text-align: center; line-height: 28px; }
.big { width: 88px; padding-top: 13px; flex-direction: column; flex: none; }
.big.wide { width: 104px; }
.bl { margin-top: 5px; text-align: center; }
.below { margin-top: 9px; }
.inl { display: inline-block; vertical-align: 2px; margin-left: 2px; }
.off { color: #a0a0a0; }
.off .far { color: #000; }
.col { padding: 6px 0 0 10px; display: flex; flex-direction: column; align-items: flex-start; }
.zoom .col, .view .col { padding-left: 6px; }
.edit .col { padding-left: 8px; }
.shape .col:nth-of-type(1) { width: 179px; }
.shape .col:nth-of-type(2) { padding-left: 0; }
.small { height: 44px; gap: 4px; }
.far { margin-left: 18px; }
.near { margin-left: 4px; }
.combo { display: flex; align-items: center; border: 2px solid #a5b886; background: #fff; }
.combo input { flex: 1; width: 0; }
.gbtn { flex: none; justify-content: center; border: 2px solid #8e9d76; border-radius: 4px; background: linear-gradient(#a4b88c, #92a870); }
.zcombo { width: 110px; height: 44px; margin-left: -6px; padding: 2px 3px 2px 8px; }
.zcombo .gbtn { width: 30px; height: 36px; }
.estcol { padding: 8px 0 0 8px; }
.sel { display: flex; align-items: center; position: relative; border: 2px solid #a9acb3; background: #fff; }
.sel select { appearance: none; flex: 1; width: 0; height: 100%; padding-left: 8px; }
.sel .ico { position: absolute; right: 13px; pointer-events: none; }
.selprod { width: 256px; height: 48px; background: linear-gradient(#f0f0f0, #e4e4e4); border-color: #acacac; }
.selprod select { font-style: italic; padding-left: 0; }
.runs { display: flex; align-items: center; height: 60px; width: 256px; margin-top: 4px; padding: 0 6px 0 8px; border: 2px solid #dcdcdc; border-radius: 4px; justify-content: space-between; }
.shapebtn { width: 86px; height: 166px; margin: 6px 0 0 4px; flex-direction: column; border: 2px solid #d3d6dc; border-radius: 4px; background: linear-gradient(#fff 47%, #f2f2f2 49%, #fafafa); padding-top: 8px; }
.shapebtn span { text-align: center; margin-top: 14px; }

main { flex: 1; min-height: 0; display: flex; }
.left { width: 494px; flex: none; border: 2px solid #c6c9d1; border-bottom: 0; display: flex; flex-direction: column; background: #fff; }
.right { width: 513px; flex: none; border: 2px solid #c6c9d1; border-width: 2px 0 0 2px; display: flex; flex-direction: column; font-size: 23px; background: #fff; }
.vsplit { flex: none; width: 6px; background: #d1d1d3; }
.phead { flex: none; height: 48px; display: flex; align-items: center; padding: 0 14px 0 9px; border-bottom: 2px solid #c6c9d1; background: linear-gradient(90deg, #f3f3f3, #fff 50%, #f3f3f3); }
.phead span { margin-right: auto; padding-top: 4px; }
.h1i { margin-right: 26px; }
.h2i { margin-right: 24px; }
.flip, .half { transform: rotate(180deg); }
.rl { transform: rotate(90deg); }
.rr { transform: rotate(-90deg); }
.phead .rl { transform: rotate(-90deg); }
.unitrow { flex: none; height: 47px; display: flex; align-items: center; padding-right: 8px; justify-content: space-between; }
.unit { width: 442px; height: 47px; padding: 2px 2px 2px 8px; }
.unit .gbtn { width: 30px; height: 40px; }
.tools { flex: none; height: 45px; display: flex; align-items: center; padding: 0 6px 0 7px; }
.tools > button + button { margin-left: 14px; }
.tools > .sign { width: 14px; justify-content: center; margin-left: 18px; padding-top: 4px; }
.tools > .sign:nth-of-type(3) { margin-left: 16px; }
.tools input { flex: 1; height: 40px; margin: 0 8px 0 12px; border: 2px solid #a9acb3; line-height: 34px; }
.tools input + button { margin-left: 0; }
.tools > button:last-child { margin-left: 11px; }
.tools > .warn { gap: 14px; margin-left: 14px; }
.tools > .warn + button:last-child { margin-left: 13px; }
.tools input::placeholder { color: #a8a8a8; opacity: 1; }
.tree { flex: 350 1 0; min-height: 0; display: flex; border: 2px solid #a3a6ad; border-bottom: 0; overflow: hidden; padding-right: 1px; }
ul { list-style: none; margin: 0; padding: 4px 0 0; flex: 1; }
li { height: 36px; display: flex; align-items: center; padding-left: 45px; white-space: nowrap; }
li.root { padding-left: 13px; }
li .ico + .ico { margin: 0 11px 4px 7px; }
.hsplit { flex: none; height: 6px; background: #d1d1d3; }
.vs { width: 34px; flex: none; display: flex; flex-direction: column; align-items: center; padding: 2px 0 1px; background: linear-gradient(90deg, #efede6, #fbfbf9 60%, #fff); }
.sb, .thumb { flex: none; width: 28px; border: 2px solid #87966c; box-shadow: 1px 1px 0 1px #fff, 2px 2px 0 1px #a5b28e; border-radius: 4px; background: linear-gradient(#a4b88c, #92a870); display: flex; align-items: center; justify-content: center; }
.sb { height: 28px; margin-bottom: 3px; }
.end { margin-top: auto; }
.thumb { background: linear-gradient(90deg, #a2b48b, #a4b88c 40%, #90a66c); }
.grip { width: 12px; height: 15px; background: repeating-linear-gradient(#cfe0a8 0 2px, #8fa56c 2px 4px); }
.grip.v { width: 15px; height: 12px; background: repeating-linear-gradient(90deg, #cfe0a8 0 2px, #8fa56c 2px 4px); }
.t1 { height: 154px; margin-top: 3px; }
.list { flex: 404 1 0; min-height: 0; display: flex; flex-direction: column; border: 2px solid #83868d; border-radius: 3px; padding: 2px; }
.lhead { height: 40px; line-height: 40px; padding-left: 301px; border-top: 1px solid #ddd; border-bottom: 2px solid #d8d8d8; background: linear-gradient(#fff, #f6f7f9); }
.litem { display: flex; align-items: center; height: 42px; gap: 11px; padding-left: 36px; }
.hs { margin-top: auto; height: 35px; display: flex; align-items: center; padding: 0 3px 0 2px; background: linear-gradient(#efede6, #fbfbf9 60%, #fff); }
.hs .sb, .fscroll .sb { margin-bottom: 0; }
.hs .end { margin: 0 0 0 auto; }
.thumb.h { width: 103px; height: 28px; margin-left: 6px; background: linear-gradient(#a4b88c, #92a870); }
.dots { flex: none; height: 11px; background: repeating-linear-gradient(90deg, #333 0 3px, transparent 3px 8px) center / 35px 3px no-repeat, #f4f4f4; border-bottom: 2px solid #c6c9d1; }
.right .dots { height: 12px; }
.nav { flex: none; height: 56px; border-bottom: 2px solid #c6c9d1; background: #f4f4f4; font-weight: 700; font-size: 23px; padding-left: 10px; gap: 19px; }
.nav.on { background: #f0ffff; }
.left .nav { padding-left: 9px; gap: 18px; }
.bicons { flex: none; height: 54px; background: #f4f4f4; display: flex; align-items: center; justify-content: flex-end; gap: 17px; padding-right: 7px; }

.center { flex: 1; min-width: 0; display: flex; flex-direction: column; }
.canvasrow { flex: 1; min-height: 0; display: flex; background: #fff; }
.plan { flex: 1; min-width: 0; height: 100%; display: block; }
.plantext { font: 32px "DejaVu Sans", Verdana, sans-serif; fill: #000; }
.plantext .red { fill: #e81010; }
.cvs { justify-content: space-between; }
.t2 { height: 54px; }
.floorbar { flex: none; height: 34px; display: flex; align-items: center; background: #fff; padding-left: 9px; }
.floorbar > button { margin-right: 16px; }
.floorbar > button:nth-child(2) { margin-right: 20px; }
.floorbar > .floor { height: 34px; padding: 9px 14px 0 7px; font-size: 23px; font-weight: 700; color: #00008b; border-right: 2px solid #aaa; }
.floorbar > .next { margin: 0 7px 0 auto; }
.fsep { width: 6px; height: 34px; background: #d1d1d1; }
.fscroll { width: 294px; display: flex; align-items: center; justify-content: space-between; padding: 0 0 0 3px; }
.fscroll .sb:last-child { margin-right: -3px; }
.sqr { width: 30px; height: 28px; }
.fsep { position: relative; }
.slider { appearance: none; width: 280px; height: 34px; margin: 0 10px; }
.slider::-webkit-slider-runnable-track { height: 6px; border-radius: 3px; background: #f0ece2; border-top: 2px solid #b4b8ba; }
.slider::-webkit-slider-thumb { appearance: none; width: 20px; height: 34px; margin-top: -16px; border: 2px solid #97a3a8; border-radius: 3px; background: linear-gradient(#4fc04a 5px, #f3f3ef 5px); }
.status { flex: none; height: 38px; display: flex; align-items: center; padding: 0 5px 0 3px; background: #f4f4f4; white-space: nowrap; }
.ready { margin-right: auto; padding-top: 4px; }
.ssel { width: 240px; height: 38px; }
.ssel select { padding-top: 4px; }
.stext { width: 487px; padding: 4px 0 0 8px; }
.status button + button { margin-left: 7px; }

.pbox { flex: 1; min-height: 0; display: flex; flex-direction: column; border: 2px solid #a9acb3; background: #dcdcdc; margin-right: 1px; }
.many { flex: none; height: 44px; line-height: 44px; padding-left: 13px; font-weight: 700; }
.pgrid { flex: none; display: flex; position: relative; background: #efefef; padding: 2px 0 2px 20px; border-bottom: 2px solid #d8d8d8; }
table { flex: 1; border-collapse: separate; border-spacing: 0; table-layout: fixed; width: 0; }
th { width: 300px; text-align: left; font-weight: 400; padding: 3px 0 0 64px; background: #fff; border: solid #efefef; border-width: 0 2px 2px 0; white-space: nowrap; }
td { padding: 3px 0 0 11px; background: #fff; border: solid #efefef; border-width: 0 2px 2px 0; white-space: nowrap; }
.r-cat > * { height: 40px; border-bottom-color: #fff; }
.r-cat2 > * { height: 39px; border-bottom-width: 0; }
.r-s > * { height: 42px; }
.r-gap > * { height: 48px; border-bottom-width: 4px; }
.r-id > * { height: 54px; }
.r-m > * { height: 46px; }
.cat th { padding-left: 12px; }
.cat th .ico { display: inline-block; margin-right: 11px; vertical-align: 6px; }
.hot th { background: #bee6fd; }
.ro td { color: #777; padding-left: 4px; }
.one td { padding-left: 11px; }
.select td, .id td { padding: 0; }
.select .sel { height: 44px; }
.select .sel select { padding-top: 2px; }
.id .idcell { display: flex; align-items: center; }
.idcell input { width: 100px; height: 52px; border: 2px solid #a9acb3; padding-left: 3px; }
.cream { border: 2px solid #4b6b1f; border-radius: 6px; background: linear-gradient(#fffefb, #efead6); justify-content: center; width: 48px; height: 48px; margin-left: 2px; }
.button td { padding: 0; }
.wideb { width: 148px; height: 41px; align-items: flex-start; }
.wideb span { display: block; height: 26px; margin-top: 6px; line-height: 34px; overflow: hidden; }
.focus .wideb { box-shadow: inset 0 0 0 3px #dfa168; }
.pgrid .vs { padding-top: 0; width: 32px; }
.t3 { height: 322px; margin: auto 0 4px; }
.callout { position: absolute; left: 9px; right: 1px; top: 468px; height: 79px; border: 6px solid #fb2314; border-radius: 5px; pointer-events: none; }
.pfoot { flex: none; height: 6px; background: #efefef; }
footer { flex: none; height: 13px; border-top: 2px solid #b4b9c6; background: linear-gradient(90deg, #e2edf9, #d8e6f8 25%, #d6dcf0 60%, #dce4f4 85%, #dfebf8); }
</style>
